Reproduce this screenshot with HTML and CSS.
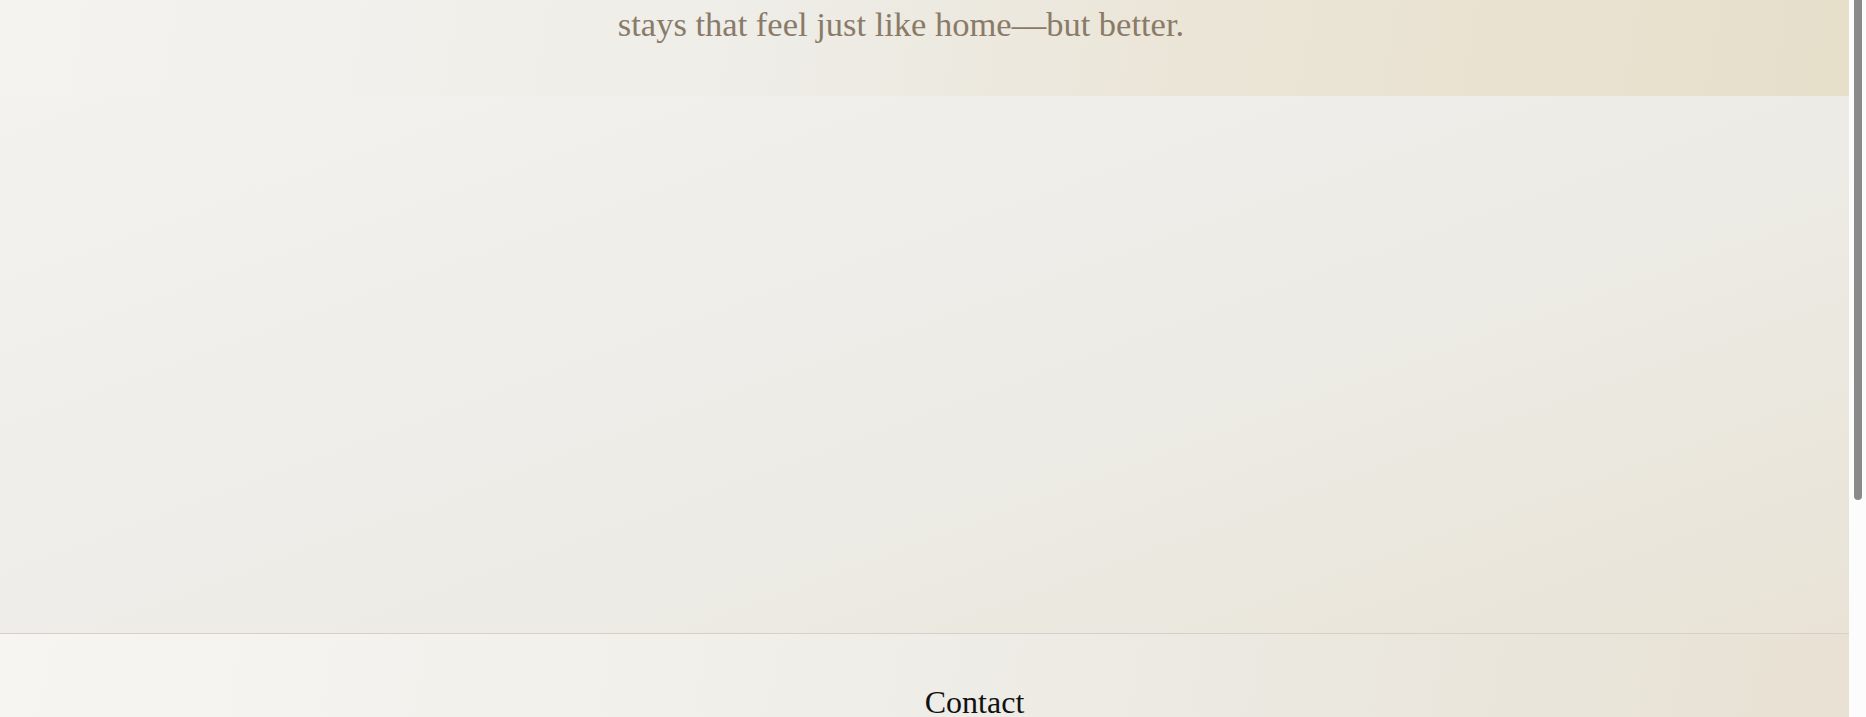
FILE: index.html
```html
<!DOCTYPE html>
<html lang="en">
<head>
<meta charset="utf-8">
<title>Stays</title>
<link rel="stylesheet" href="styles.css">
</head>
<body>
<div class="page">
  <main class="main">
    <section class="hero-end">
      <p class="tagline">stays that feel just like home—but better.</p>
    </section>
    <section class="spacer"></section>
    <footer class="footer">
      <h2 class="footer-title">Contact</h2>
    </footer>
  </main>
  <div class="scrollbar"><div class="thumb"></div></div>
</div>
</body>
</html>
```

FILE: styles.css
```css
html, body {
  margin: 0;
  padding: 0;
  height: 100%;
  overflow: hidden;
}
body {
  background: #fcfcfc;
}
.page {
  display: flex;
  height: 717px;
  overflow: hidden;
}
.main {
  flex: 1;
  display: flex;
  flex-direction: column;
  min-width: 0;
  overflow: hidden;
}
.hero-end {
  flex: none;
  height: 96px;
  box-sizing: border-box;
  padding: 4px 47px 0 0;
  text-align: center;
  background: linear-gradient(100deg, #f4f3ef 0%, #eeede8 40%, #ebe5d7 65%, #e6dfca 100%);
}
.tagline {
  margin: 0;
  font-family: "Liberation Serif", "Times New Roman", serif;
  font-size: 34.5px;
  line-height: 1.2;
  color: #8a7b69;
}
.spacer {
  flex: none;
  height: 537px;
  border-bottom: 1px solid #d6d1c6;
  background: linear-gradient(160deg, #f3f2ee 0%, #eeede9 40%, #ecebe5 60%, #e9e3d6 100%);
}
.footer {
  flex: none;
  height: 120px;
  box-sizing: border-box;
  padding: 49px 0 0 100px;
  text-align: center;
  background: linear-gradient(100deg, #f6f5f1 0%, #f0efea 40%, #ebe8e0 70%, #e8e1d3 100%);
}
.footer-title {
  margin: 0;
  font-family: "Liberation Serif", "Times New Roman", serif;
  font-weight: 400;
  font-size: 32px;
  line-height: 1.2;
  color: #111111;
}
.scrollbar {
  width: 17px;
  flex: none;
  background: #fcfcfc;
}
.thumb {
  width: 8px;
  height: 500px;
  margin-left: 5px;
  background: #8a8a8a;
  border-radius: 0 0 4px 4px;
}
```
